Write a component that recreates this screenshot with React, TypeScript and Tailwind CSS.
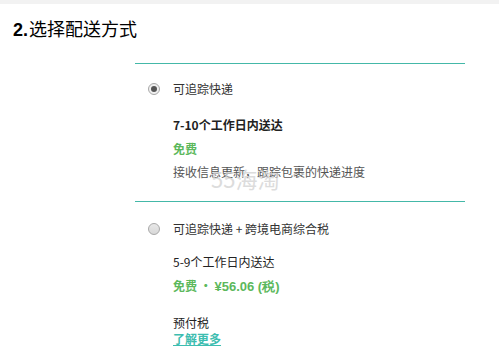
export default function App() {
  return (
    <div className="min-h-[356px] w-[499px] bg-white font-['Noto_Sans_CJK_SC',sans-serif] text-[#333]">
      <div className="h-[4px] bg-[#f2f2f2]" />
      <h2 className="flex items-baseline pl-[13px] pt-[12px] text-[18px] leading-[24px] text-black">
        <span className="font-['Liberation_Sans_Narrow','Liberation_Sans',sans-serif] font-bold">2.</span>
        <span className="ml-[1px] font-normal">选择配送方式</span>
      </h2>
      <div className="ml-[135px] mt-[21px] w-[330px]">
        <div className="h-px bg-[#44b8a8]" />
        <div className="pb-[20px] pt-[16px]">
          <label className="flex items-center text-[12px] leading-[18px]">
            <span className="ml-[13px] flex h-[12px] w-[12px] items-center justify-center rounded-full border border-[#a8a8a8] bg-[#f0f0f0]">
              <span className="h-[6px] w-[6px] rounded-full bg-[#555]" />
            </span>
            <span className="ml-[13px]">可追踪快递</span>
          </label>
          <div className="ml-[38px] mt-[18px] text-[12px] leading-[18px]">
            <div className="font-bold text-[#222]">7-10个工作日内送达</div>
            <div className="mt-[6px] font-bold text-[#5cb85c]">免费</div>
            <div className="relative mt-[5px] text-[#555]">
              接收信息更新，跟踪包裹的快递进度
              <span className="pointer-events-none absolute left-[38px] top-[4px] font-['Noto_Sans_CJK_SC',sans-serif] text-[22px] leading-[22px] text-[#d4d4d4] opacity-80">
                55海淘
              </span>
            </div>
          </div>
        </div>
        <div className="h-px bg-[#44b8a8]" />
        <div className="pt-[18px]">
          <label className="flex items-center text-[12px] leading-[18px]">
            <span className="ml-[13px] h-[12px] w-[12px] rounded-full border border-[#a8a8a8] bg-gradient-to-b from-[#e8e8e8] to-[#d8d8d8]" />
            <span className="ml-[13px]">可追踪快递 + 跨境电商综合税</span>
          </label>
          <div className="ml-[38px] mt-[15px] text-[12px] leading-[18px]">
            <div className="text-[#222]">5-9个工作日内送达</div>
            <div className="mt-[6px] font-bold text-[#5cb85c]">
              免费 •{" "}
              <span className="font-['Liberation_Sans_Narrow','Liberation_Sans',sans-serif] text-[13px]">¥56.06 (税)</span>
            </div>
            <div className="mt-[18px] text-[#222]">预付税</div>
            <a href="#" className="-mt-[2px] block font-bold text-[#3dbdb0] underline">
              了解更多
            </a>
          </div>
        </div>
      </div>
    </div>
  );
}
